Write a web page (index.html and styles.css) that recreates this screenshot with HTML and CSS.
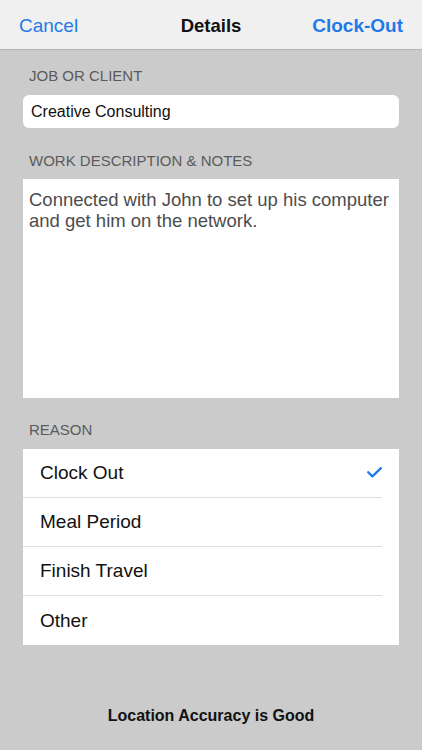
FILE: index.html
```html
<!DOCTYPE html>
<html lang="en">
<head>
<meta charset="utf-8">
<title>Details</title>
<link rel="stylesheet" href="styles.css">
</head>
<body>
<div class="screen">
  <header class="nav">
    <span class="nav-btn nav-left">Cancel</span>
    <span class="nav-title">Details</span>
    <span class="nav-btn nav-right">Clock-Out</span>
  </header>
  <main class="content">
    <div class="label label-first">JOB OR CLIENT</div>
    <div class="input">Creative Consulting</div>
    <div class="label label-notes">WORK DESCRIPTION &amp; NOTES</div>
    <div class="textarea">Connected with John to set up his computer and get him on the network.</div>
    <div class="label label-reason">REASON</div>
    <ul class="list">
      <li class="row"><span>Clock Out</span>
        <svg class="check" width="15" height="11" viewBox="0 0 15 11"><path d="M1.2 5.2 L5.4 9.4 L13.9 1.2" fill="none" stroke="#1f7ae8" stroke-width="2.3" stroke-linecap="round" stroke-linejoin="round"/></svg>
      </li>
      <li class="row"><span>Meal Period</span></li>
      <li class="row"><span>Finish Travel</span></li>
      <li class="row row-last"><span>Other</span></li>
    </ul>
    <div class="footer">Location Accuracy is Good</div>
  </main>
</div>
</body>
</html>
```
FILE: styles.css
```css
* { box-sizing: border-box; }
html, body {
  margin: 0;
  padding: 0;
  background: #cbcbcb;
  font-family: "Liberation Sans", Arial, sans-serif;
}
.screen {
  width: 422px;
  height: 750px;
  background: #cbcbcb;
  overflow: hidden;
}
.nav {
  height: 50px;
  padding: 3px 19px 0;
  background: #f0f0f0;
  border-bottom: 1px solid #b3b3b3;
  display: grid;
  grid-template-columns: 1fr auto 1fr;
  align-items: center;
  font-size: 19px;
}
.nav-btn { color: #1f7ae8; }
.nav-left { justify-self: start; }
.nav-right { justify-self: end; font-weight: bold; }
.nav-title { font-weight: bold; color: #111; font-size: 18.5px; }
.content {
  padding: 0 23px;
  display: flex;
  flex-direction: column;
}
.label {
  font-size: 15px;
  line-height: 18px;
  color: #5b5b5b;
  padding-left: 6px;
}
.label-first { margin-top: 17px; }
.label-notes { margin-top: 24px; }
.label-reason { margin-top: 23px; }
.input {
  margin-top: 10px;
  height: 33px;
  line-height: 33px;
  background: #fff;
  border-radius: 6px;
  padding: 0 8px;
  font-size: 16px;
  color: #111;
}
.textarea {
  margin-top: 9px;
  height: 219px;
  background: #fff;
  padding: 10px 6px 0;
  font-size: 18.5px;
  line-height: 21px;
  color: #4d4d4d;
}
.list {
  list-style: none;
  margin: 10px 0 0;
  padding: 0;
  background: #fff;
}
.row {
  height: 49px;
  margin-right: 17px;
  padding-left: 17px;
  border-bottom: 1px solid #dedede;
  display: flex;
  align-items: center;
  justify-content: space-between;
  font-size: 19px;
  color: #111;
}
.row-last { border-bottom: none; }
.check { display: block; margin-top: -1px; }
.footer {
  margin-top: 61px;
  text-align: center;
  font-size: 16px;
  line-height: 19px;
  font-weight: bold;
  color: #111;
}
```
